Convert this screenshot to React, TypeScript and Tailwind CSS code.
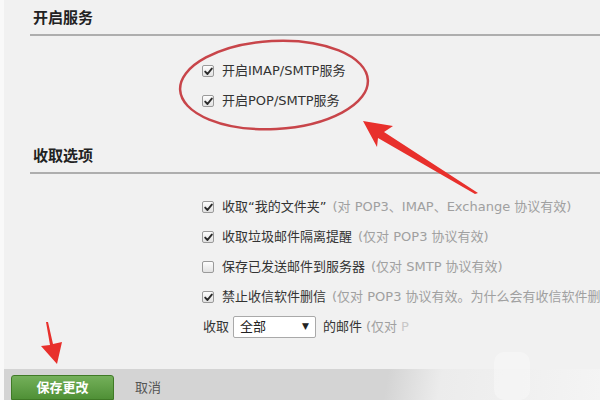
import { FunctionComponent } from "react"

const Check: FunctionComponent<{ on?: boolean }> = ({ on }) => (
    <span className="w-[12px] h-[12px] shrink-0 rounded-[2px] border border-[#9a9a9a] bg-[linear-gradient(#fdfdfd,#e2e2e2)] flex items-center justify-center">
        {on && (
            <svg width="9" height="9" viewBox="0 0 9 9">
                <path d="M1.2 4.6 L3.5 7 L7.8 1.6" fill="none" stroke="#2b2b2b" strokeWidth="1.9" strokeLinecap="round" strokeLinejoin="round" />
            </svg>
        )}
    </span>
)

const Row: FunctionComponent<{ on?: boolean; label: string; note?: string }> = ({ on, label, note }) => (
    <div className="h-[30px] pl-[198px] flex flex-row items-center gap-[8px] whitespace-nowrap">
        <Check on={on} />
        <span className="text-[#333]">{label}</span>
        {note && <span className="text-[#a0a0a0] -ml-[2px]">{note}</span>}
    </div>
)

const App: FunctionComponent = () => {
    return (
        <div className="relative w-[600px] h-[400px] overflow-hidden bg-[#f1f1f1] flex flex-row text-[13px] font-['DejaVu_Sans','Noto_Sans_CJK_SC',sans-serif]">
            <div className="w-[4px] bg-[#f9f9f9] shrink-0" />
            <div className="flex-1 flex flex-col min-w-0">
                <div className="h-[36px] ml-[26px] pt-[7px] pl-[3px] border-b-2 border-[#aeaeae] font-bold text-[15px] leading-[22px] text-[#222]">
                    开启服务
                </div>
                <div className="mt-[20px] flex flex-col">
                    <Row on label="开启IMAP/SMTP服务" />
                    <Row on label="开启POP/SMTP服务" />
                </div>
                <div className="mt-[22px] h-[36px] ml-[26px] pt-[7px] pl-[3px] border-b-2 border-[#aeaeae] font-bold text-[15px] leading-[22px] text-[#222]">
                    收取选项
                </div>
                <div className="mt-[18px] flex flex-col">
                    <Row on label="收取“我的文件夹”" note="(对 POP3、IMAP、Exchange 协议有效)" />
                    <Row on label="收取垃圾邮件隔离提醒" note="(仅对 POP3 协议有效)" />
                    <Row label="保存已发送邮件到服务器" note="(仅对 SMTP 协议有效)" />
                    <Row on label="禁止收信软件删信" note="(仅对 POP3 协议有效。为什么会有收信软件删" />
                    <div className="h-[30px] pl-[199px] flex flex-row items-center whitespace-nowrap">
                        <span className="text-[#333]">收取</span>
                        <div className="ml-[4px] w-[83px] h-[22px] bg-white border border-[#a9a9a9] rounded-[2px] flex flex-row items-center justify-between pl-[6px] pr-[6px] text-[#222]">
                            <span>全部</span>
                            <span className="text-[9px]">▼</span>
                        </div>
                        <span className="ml-[7px] text-[#333]">的邮件</span>
                        <span className="ml-[4px] text-[#a0a0a0]">(仅对</span>
                        <span className="ml-[4px] text-[#c8c8c8]">P</span>
                    </div>
                </div>
                <div className="mt-auto h-[31px] flex flex-row items-end bg-[linear-gradient(100deg,#d4d4d4_64%,#ececec_73%,#f4f4f4_100%)]">
                    <div className="ml-[7px] w-[103px] h-[25px] rounded-t-[3px] border border-[#3f7a26] bg-[linear-gradient(#74b05a,#4f9036)] flex items-center justify-center text-white font-bold text-[13px]">
                        保存更改
                    </div>
                    <div className="ml-[21px] h-[25px] flex items-center text-[#555]">取消</div>
                </div>
            </div>
            <svg className="absolute inset-0 pointer-events-none" width="600" height="400" viewBox="0 0 600 400">
                <ellipse cx="274" cy="85" rx="94" ry="44" fill="none" stroke="#c8454a" strokeWidth="2.5" transform="rotate(-3 274 85)" />
                <polygon points="363,121 393,126 384,132 478,193 475,194 378,138 377,147" fill="#e8302c" />
                <polygon points="46,322 48,322 53,344 62,342 57,364 41,346 50,345" fill="#e8302c" />
                <rect x="494" y="352" width="36" height="48" rx="10" fill="#ffffff" opacity="0.3" />
            </svg>
        </div>
    )
}

export default App
